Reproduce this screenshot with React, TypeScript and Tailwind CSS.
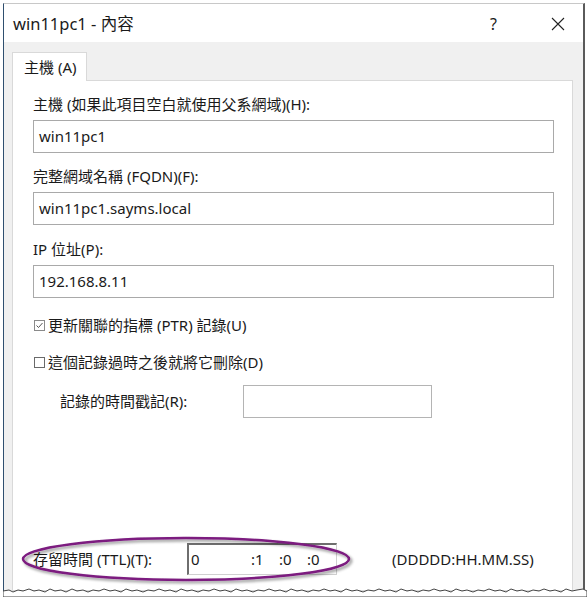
import React from "react";

const font = { fontFamily: "'Noto Sans','Noto Sans CJK TC',sans-serif" };

function Field({ value }: { value: string }) {
  return (
    <div className="h-[33px] w-[521px] border border-[#a9a9a9] bg-white pl-[5px] flex items-center text-[15px] text-[#1a1a1a]">
      {value}
    </div>
  );
}

export default function App() {
  return (
    <div className="relative w-[588px] h-[597px] bg-white overflow-hidden text-[#1a1a1a]" style={font}>
      <div className="h-[3px] bg-white" />
      <div className="relative ml-[3px] w-[582px] h-[588px] flex flex-col border-l border-l-[#2f4f6f] border-r-2 border-r-[#5a5a5a] border-t border-t-[#c8c8c8]">
        {/* title bar */}
        <div className="h-[38px] bg-white flex items-center pl-[9px] text-[16.5px] shrink-0">
          <span className="mt-[2px]">win11pc1 - 內容</span>
          <span className="ml-auto mr-[54px] text-[16px] mt-[2px]">?</span>
          <svg width="14" height="14" viewBox="0 0 14 14" className="mr-[18px] mt-[2px]">
            <path d="M1 1 L13 13 M13 1 L1 13" stroke="#222" strokeWidth="1.1" />
          </svg>
        </div>
        {/* body */}
        <div className="flex-1 bg-[#f0f0f0] pl-[8px] pr-[10px] pt-[10px] flex flex-col">
          <div className="flex">
            <div className="h-[29px] w-[75px] bg-white border border-[#d9d9d9] border-b-0 flex items-center pl-[11px] text-[15px] -mb-px relative z-10">
              主機 (A)
            </div>
          </div>
          <div className="flex-1 bg-white border border-[#d9d9d9] pl-[20px] flex flex-col text-[15px]">
            <div className="mt-[13px] h-[20px] leading-[20px]">主機 (如果此項目空白就使用父系網域)(H):</div>
            <div className="mt-[6px]"><Field value="win11pc1" /></div>
            <div className="mt-[13px] h-[20px] leading-[20px]">完整網域名稱 (FQDN)(F):</div>
            <div className="mt-[6px]"><Field value="win11pc1.sayms.local" /></div>
            <div className="mt-[14px] h-[20px] leading-[20px]">IP 位址(P):</div>
            <div className="mt-[6px]"><Field value="192.168.8.11" /></div>
            <div className="mt-[17px] h-[20px] flex items-center">
              <svg width="11" height="11" viewBox="0 0 11 11" className="mr-[3px] ml-[1px]">
                <rect x="0.5" y="0.5" width="10" height="10" fill="white" stroke="#8a8a8a" />
                <path d="M2.5 5.5 L4.5 7.5 L8.5 3" fill="none" stroke="#555" strokeWidth="1" />
              </svg>
              <span>更新關聯的指標 (PTR) 記錄(U)</span>
            </div>
            <div className="mt-[17px] h-[20px] flex items-center">
              <svg width="11" height="11" viewBox="0 0 11 11" className="mr-[3px] ml-[1px]">
                <rect x="0.5" y="0.5" width="10" height="10" fill="white" stroke="#6a6a6a" />
              </svg>
              <span>這個記錄過時之後就將它刪除(D)</span>
            </div>
            <div className="mt-[13px] flex items-center">
              <span className="ml-[27px] w-[183px]">記錄的時間戳記(R):</span>
              <div className="h-[33px] w-[189px] border border-[#b4b4b4] bg-white" />
            </div>
            <div className="flex-1" />
            <div className="mb-[15px] flex items-center relative">
              <span className="w-[154px]">存留時間 (TTL)(T):</span>
              <div className="h-[32px] w-[150px] border-t-2 border-l-2 border-t-[#6e6e6e] border-l-[#6e6e6e] border-r border-b border-r-[#d0d0d0] border-b-[#d0d0d0] bg-white flex items-start pt-[3px] text-[15px]">
                <span className="ml-[2px] w-[60px]">0</span>
                <span className="w-[28px]">:1</span>
                <span className="w-[28px]">:0</span>
                <span>:0</span>
              </div>
              <span className="ml-[55px]">(DDDDD:HH.MM.SS)</span>
              <svg width="340" height="56" viewBox="0 0 340 56" className="absolute left-[-14px] top-[-12px] pointer-events-none" style={{ overflow: "visible" }}>
                <defs>
                  <filter id="sh" x="-10%" y="-30%" width="120%" height="160%">
                    <feGaussianBlur in="SourceAlpha" stdDeviation="1.5" />
                    <feOffset dx="1.5" dy="2" result="o" />
                    <feComponentTransfer><feFuncA type="linear" slope="0.45" /></feComponentTransfer>
                    <feMerge><feMergeNode /><feMergeNode in="SourceGraphic" /></feMerge>
                  </filter>
                </defs>
                <ellipse cx="167" cy="28" rx="163" ry="21" fill="none" stroke="#7b1a7f" strokeWidth="2.5" filter="url(#sh)" />
              </svg>
            </div>
          </div>
        </div>
        {/* torn edge */}
        <svg width="584" height="12" viewBox="0 0 584 12" className="absolute left-[-1px] bottom-[-6px]">
          <path
            d="M0 6 L6 5 L10 7 L15 5 L20 6 L26 4 L31 6 L36 5 L42 7 L47 4 L52 6 L58 5 L63 7 L69 4 L74 6 L80 5 L85 7 L90 5 L96 6 L101 4 L107 6 L112 5 L118 7 L123 4 L129 6 L134 5 L140 7 L145 5 L151 6 L156 4 L162 6 L167 5 L173 7 L178 4 L184 6 L189 5 L195 7 L200 5 L206 6 L211 4 L217 6 L222 5 L228 7 L233 4 L239 6 L244 5 L250 7 L255 5 L261 6 L266 4 L272 6 L277 5 L283 7 L288 4 L294 6 L299 5 L305 7 L310 5 L316 6 L321 4 L327 6 L332 5 L338 7 L343 4 L349 6 L354 5 L360 7 L365 5 L371 6 L376 4 L382 6 L387 5 L393 7 L398 4 L404 6 L409 5 L415 7 L420 5 L426 6 L431 4 L437 6 L442 5 L448 7 L453 4 L459 6 L464 5 L470 7 L475 5 L481 6 L486 4 L492 6 L497 5 L503 7 L508 4 L514 6 L519 5 L525 7 L530 5 L536 6 L541 4 L547 6 L552 5 L558 7 L563 4 L569 6 L574 5 L580 4 L584 6 L584 12 L0 12 Z"
            fill="white"
            stroke="#444"
            strokeWidth="1"
          />
        </svg>
      </div>
    </div>
  );
}
